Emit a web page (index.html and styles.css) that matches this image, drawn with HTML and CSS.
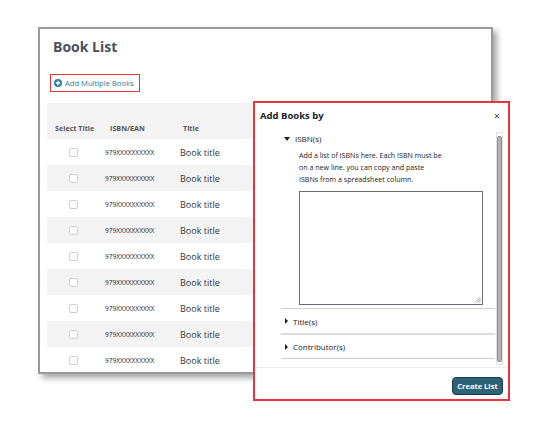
FILE: index.html
```html
<!DOCTYPE html>
<html>
<head>
<meta charset="utf-8">
<link rel="stylesheet" href="styles.css">
</head>
<body>
<div class="page">
  <div class="card">
    <h1 class="title">Book List</h1>
    <a class="add-link"><span class="plus-icon"><svg viewBox="0 0 8 8" width="8" height="8"><circle cx="4" cy="4" r="4" fill="#2f7f98"/><path d="M4 1.8v4.4M1.8 4h4.4" stroke="#fff" stroke-width="1.3"/></svg></span>Add Multiple Books</a>
    <div class="table">
      <div class="row head"><div class="c1">Select Title</div><div class="c2">ISBN/EAN</div><div class="c3">Title</div></div>
      <div class="row"><div class="c1"><span class="cb"></span></div><div class="c2">979XXXXXXXXXX</div><div class="c3">Book title</div></div>
      <div class="row alt"><div class="c1"><span class="cb"></span></div><div class="c2">979XXXXXXXXXX</div><div class="c3">Book title</div></div>
      <div class="row"><div class="c1"><span class="cb"></span></div><div class="c2">979XXXXXXXXXX</div><div class="c3">Book title</div></div>
      <div class="row alt"><div class="c1"><span class="cb"></span></div><div class="c2">979XXXXXXXXXX</div><div class="c3">Book title</div></div>
      <div class="row"><div class="c1"><span class="cb"></span></div><div class="c2">979XXXXXXXXXX</div><div class="c3">Book title</div></div>
      <div class="row alt"><div class="c1"><span class="cb"></span></div><div class="c2">979XXXXXXXXXX</div><div class="c3">Book title</div></div>
      <div class="row"><div class="c1"><span class="cb"></span></div><div class="c2">979XXXXXXXXXX</div><div class="c3">Book title</div></div>
      <div class="row alt"><div class="c1"><span class="cb"></span></div><div class="c2">979XXXXXXXXXX</div><div class="c3">Book title</div></div>
      <div class="row"><div class="c1"><span class="cb"></span></div><div class="c2">979XXXXXXXXXX</div><div class="c3">Book title</div></div>
    </div>
  </div>

  <div class="modal">
    <div class="modal-head"><span class="modal-title">Add Books by</span><span class="close">×</span></div>
    <div class="modal-body">
      <div class="sections">
        <div class="section open">
          <div class="sec-head"><span class="tri-down"></span>ISBN(s)</div>
          <div class="sec-content">
            <p class="desc">Add a list of ISBNs here. Each ISBN must be<br>on a new line. you can copy and paste<br>ISBNs from a spreadsheet column.</p>
            <div class="textarea"><span class="grip"><svg viewBox="0 0 7 7" width="7" height="7"><path d="M6.5 1L1 6.5M6.5 3.5L3.5 6.5M6.5 5.5L5.5 6.5" stroke="#888" stroke-width="0.8"/></svg></span></div>
          </div>
        </div>
        <div class="section s-title">
          <div class="sec-head"><span class="tri-right"></span>Title(s)</div>
        </div>
        <div class="section s-contrib">
          <div class="sec-head"><span class="tri-right"></span>Contributor(s)</div>
        </div>
      </div>
      <div class="scrollbar"><div class="thumb"></div></div>
    </div>
    <div class="modal-foot"><button class="create">Create List</button></div>
  </div>
</div>
</body>
</html>
```
FILE: styles.css
```css
* { box-sizing: border-box; }
html, body { margin: 0; padding: 0; background: #fff; }
body { font-family: "Open Sans", "Liberation Sans", sans-serif; color: #333; }
.page { position: relative; width: 540px; height: 421px; padding: 27px 0 0 38px; }

.card {
  width: 455px;
  height: 347px;
  border: 2px solid #9a9a9a;
  background: #fff;
  box-shadow: 4px 4px 6px rgba(0,0,0,0.35);
  padding: 8px 0 0 7px;
  overflow: hidden;
}
.title {
  margin: 0 0 0 6px;
  font-size: 14px;
  line-height: 20px;
  font-weight: 700;
  color: #4b505a;
}
.add-link {
  display: inline-flex;
  align-items: center;
  gap: 3px;
  margin: 17px 0 0 3px;
  height: 18px;
  padding: 0 5px 0 3px;
  border: 1.5px solid #e8343a;
  font-size: 7.6px;
  color: #2f7a93;
}
.plus-icon { display: flex; }
.table { margin-top: 11px; width: 444px; }
.row {
  display: grid;
  grid-template-columns: 53px 75px 1fr;
  align-items: center;
  height: 26px;
  background: #fff;
}
.row.alt, .row.head { background: #f3f3f3; }
.row.head {
  height: 36px;
  align-items: end;
  padding-bottom: 6px;
  font-size: 7.2px;
  font-weight: 700;
  color: #555;
}
.row.head .c1 { padding-left: 8px; }
.row.head .c2 { padding-left: 10px; }
.row.head .c3 { padding-left: 8px; }
.c1 { display: flex; }
.row:not(.head) .c1 { justify-content: center; }
.cb {
  width: 9px; height: 9px;
  border: 1px solid #cfcfcf;
  border-radius: 2px;
  background: #fff;
}
.row:not(.head) .c2 { font-size: 6.6px; color: #222; padding-left: 5px; letter-spacing: 0; }
.row:not(.head) .c3 { font-size: 9px; color: #333; padding-left: 5px; }

.modal {
  position: absolute;
  left: 253px;
  top: 101px;
  width: 257px;
  height: 300px;
  border: 2px solid #e8343a;
  background: #fff;
  display: flex;
  flex-direction: column;
}
.modal-head {
  display: flex;
  justify-content: space-between;
  align-items: center;
  height: 24px;
  padding: 0 8px 0 5px;
}
.modal-title { font-size: 9.5px; font-weight: 700; color: #222; }
.close { font-size: 11px; color: #444; line-height: 1; }
.modal-body {
  display: flex;
  height: 241px;
  padding: 5px 0 0 26px;
  border-bottom: 1px solid #ececec;
}
.sections { width: 214px; }
.sec-head {
  display: flex;
  align-items: center;
  font-size: 8px;
  color: #222;
  padding-left: 3px;
  gap: 5px;
}
.section.open .sec-head { height: 13px; }
.tri-down {
  width: 0; height: 0;
  border-left: 3px solid transparent;
  border-right: 3px solid transparent;
  border-top: 4px solid #222;
}
.tri-right {
  width: 0; height: 0;
  border-top: 3px solid transparent;
  border-bottom: 3px solid transparent;
  border-left: 3px solid #222;
  margin-left: 1px;
}
.sec-content { padding: 4px 0 3px 18px; }
.desc {
  margin: 0;
  font-size: 7.1px;
  line-height: 12px;
  color: #222;
}
.textarea {
  position: relative;
  margin-top: 6px;
  width: 184px;
  height: 114px;
  border: 1px solid #6a6a78;
}
.grip { position: absolute; right: 1px; bottom: 1px; display: flex; }
.section.open { border-bottom: 1px solid #cfcfd4; }
.s-title { height: 26px; display: flex; align-items: center; border-bottom: 2px solid #dcdce0; }
.s-contrib { height: 24px; display: flex; align-items: center; border-bottom: 1px solid #cfcfd4; }
.scrollbar {
  margin-left: 1px;
  width: 7px;
  height: 233px;
  border: 1px solid #e2e2e2;
  padding: 3px 0 2px 0;
  display: flex;
  justify-content: center;
}
.thumb {
  width: 5px;
  height: 100%;
  background: #b4b4b4;
  border: 1px solid #8e8e8e;
  border-radius: 2px;
}
.modal-foot {
  flex: 1;
  display: flex;
  justify-content: flex-end;
  align-items: flex-start;
  padding: 9px 5px 0 0;
}
.create {
  font-family: "Open Sans", "Liberation Sans", sans-serif;
  font-size: 7.5px;
  font-weight: 700;
  color: #fff;
  background: #2e6276;
  border: 1.5px solid #173c4a;
  border-radius: 4px;
  height: 18px;
  width: 51px;
  padding: 0;
}
```
